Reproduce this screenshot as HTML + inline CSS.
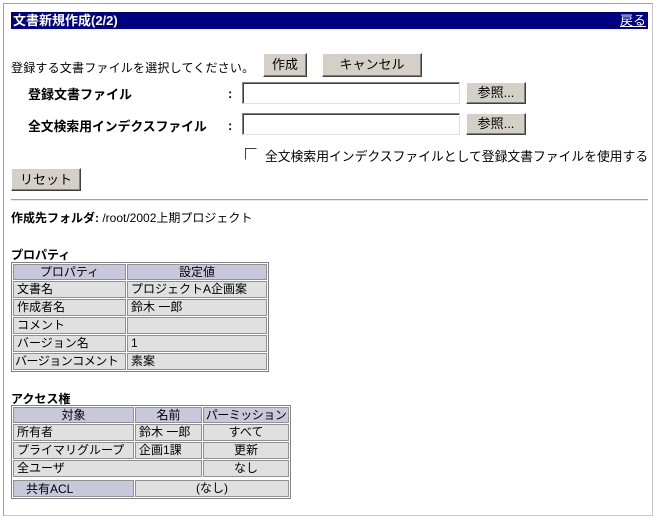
<!DOCTYPE html>
<html><head><meta charset="utf-8"><style>
body{margin:0;width:660px;height:521px;background:#fff;font-family:"Liberation Sans","Noto Sans CJK JP",sans-serif;font-size:13px;color:#000;position:relative;overflow:hidden}
.a{position:absolute;white-space:nowrap}
.frame{left:3px;top:3px;width:648px;height:511px;border:1px solid #a0a0a0;border-right-color:#c8c8c8;border-bottom-color:#c8c8c8}
.bar{left:11px;top:12px;width:637px;height:17px;background:#000080;color:#fff;font-weight:bold;line-height:17px}
.btn{background:#d4d0c8;border:1px solid;border-color:#fff #404040 #404040 #fff;box-shadow:inset -1px -1px #808080;text-align:center;box-sizing:border-box}
.inp{background:#fff;border:1px solid;border-color:#808080 #e0e0e0 #e0e0e0 #808080;box-shadow:inset 1px 1px #404040;box-sizing:border-box}
table{position:absolute;border-collapse:separate;border-spacing:1px;background:#fff;border:1px solid #808080;font-size:12px;table-layout:fixed}
td{background:#e0e0e0;border:1px solid #909090;padding:0 3px;height:15px;line-height:15px;white-space:nowrap;overflow:hidden}
th{background:#c8c8dc;border:1px solid #909090;font-weight:normal;height:14px;line-height:14px;padding:0;white-space:nowrap;overflow:hidden}
</style></head><body>
<div class="a frame"></div>
<div class="a bar"><span style="margin-left:2px">文書新規作成(2/2)</span><span style="position:absolute;right:2px;font-weight:normal;text-decoration:underline">戻る</span></div>
<div class="a" style="left:11px;top:59px;font-size:12px;letter-spacing:0.2px">登録する文書ファイルを選択してください。</div>
<div class="a btn" style="left:263px;top:53px;width:44px;height:24px;line-height:22px">作成</div>
<div class="a btn" style="left:322px;top:53px;width:100px;height:24px;line-height:22px">キャンセル</div>
<div class="a" style="left:28px;top:84px;font-weight:bold">登録文書ファイル</div>
<div class="a" style="left:228px;top:86px;font-weight:bold">:</div>
<div class="a inp" style="left:242px;top:82px;width:218px;height:22px"></div>
<div class="a btn" style="left:466px;top:82px;width:60px;height:22px;line-height:20px">参照...</div>
<div class="a" style="left:28px;top:116px;font-weight:bold;font-size:12.8px">全文検索用インデクスファイル</div>
<div class="a" style="left:228px;top:118px;font-weight:bold">:</div>
<div class="a inp" style="left:242px;top:113px;width:218px;height:22px"></div>
<div class="a btn" style="left:466px;top:113px;width:60px;height:22px;line-height:20px">参照...</div>
<div class="a inp" style="left:245px;top:148px;width:12px;height:12px;box-shadow:none;border-color:#404040 #fff #fff #404040"></div>
<div class="a" style="left:265px;top:146px;font-size:12.8px">全文検索用インデクスファイルとして登録文書ファイルを使用する</div>
<div class="a btn" style="left:11px;top:168px;width:70px;height:23px;line-height:21px">リセット</div>
<div class="a" style="left:11px;top:199px;width:637px;height:1px;background:#a0a0a0;border-bottom:1px solid #e8e8e8"></div>
<div class="a" style="left:11px;top:209px;font-size:12px"><b>作成先フォルダ:</b> /root/2002上期プロジェクト</div>
<div class="a" style="left:11px;top:246px;font-weight:bold;font-size:12px">プロパティ</div>
<table style="left:11px;top:262px;width:258px">
<colgroup><col style="width:113px"><col></colgroup>
<tr><th>プロパティ</th><th>設定値</th></tr>
<tr><td>文書名</td><td>プロジェクトA企画案</td></tr>
<tr><td>作成者名</td><td>鈴木 一郎</td></tr>
<tr><td>コメント</td><td></td></tr>
<tr><td>バージョン名</td><td>1</td></tr>
<tr><td style="padding:0 1px;letter-spacing:-0.5px">バージョンコメント</td><td>素案</td></tr>
</table>
<div class="a" style="left:11px;top:390px;font-weight:bold;font-size:12px">アクセス権</div>
<table style="left:11px;top:405px;width:280px">
<colgroup><col style="width:121px"><col style="width:67px"><col></colgroup>
<tr><th>対象</th><th>名前</th><th style="letter-spacing:-0.5px">パーミッション</th></tr>
<tr><td>所有者</td><td>鈴木 一郎</td><td style="text-align:center">すべて</td></tr>
<tr><td>プライマリグループ</td><td>企画1課</td><td style="text-align:center">更新</td></tr>
<tr><td colspan="2">全ユーザ</td><td style="text-align:center">なし</td></tr>
<tr><td colspan="3" style="padding:0;height:1px;line-height:1px;background:#fff;border:none"></td></tr>
<tr><th style="text-align:left;padding-left:12px">共有ACL</th><td colspan="2" style="text-align:center">(なし)</td></tr>
</table>
</body></html>
